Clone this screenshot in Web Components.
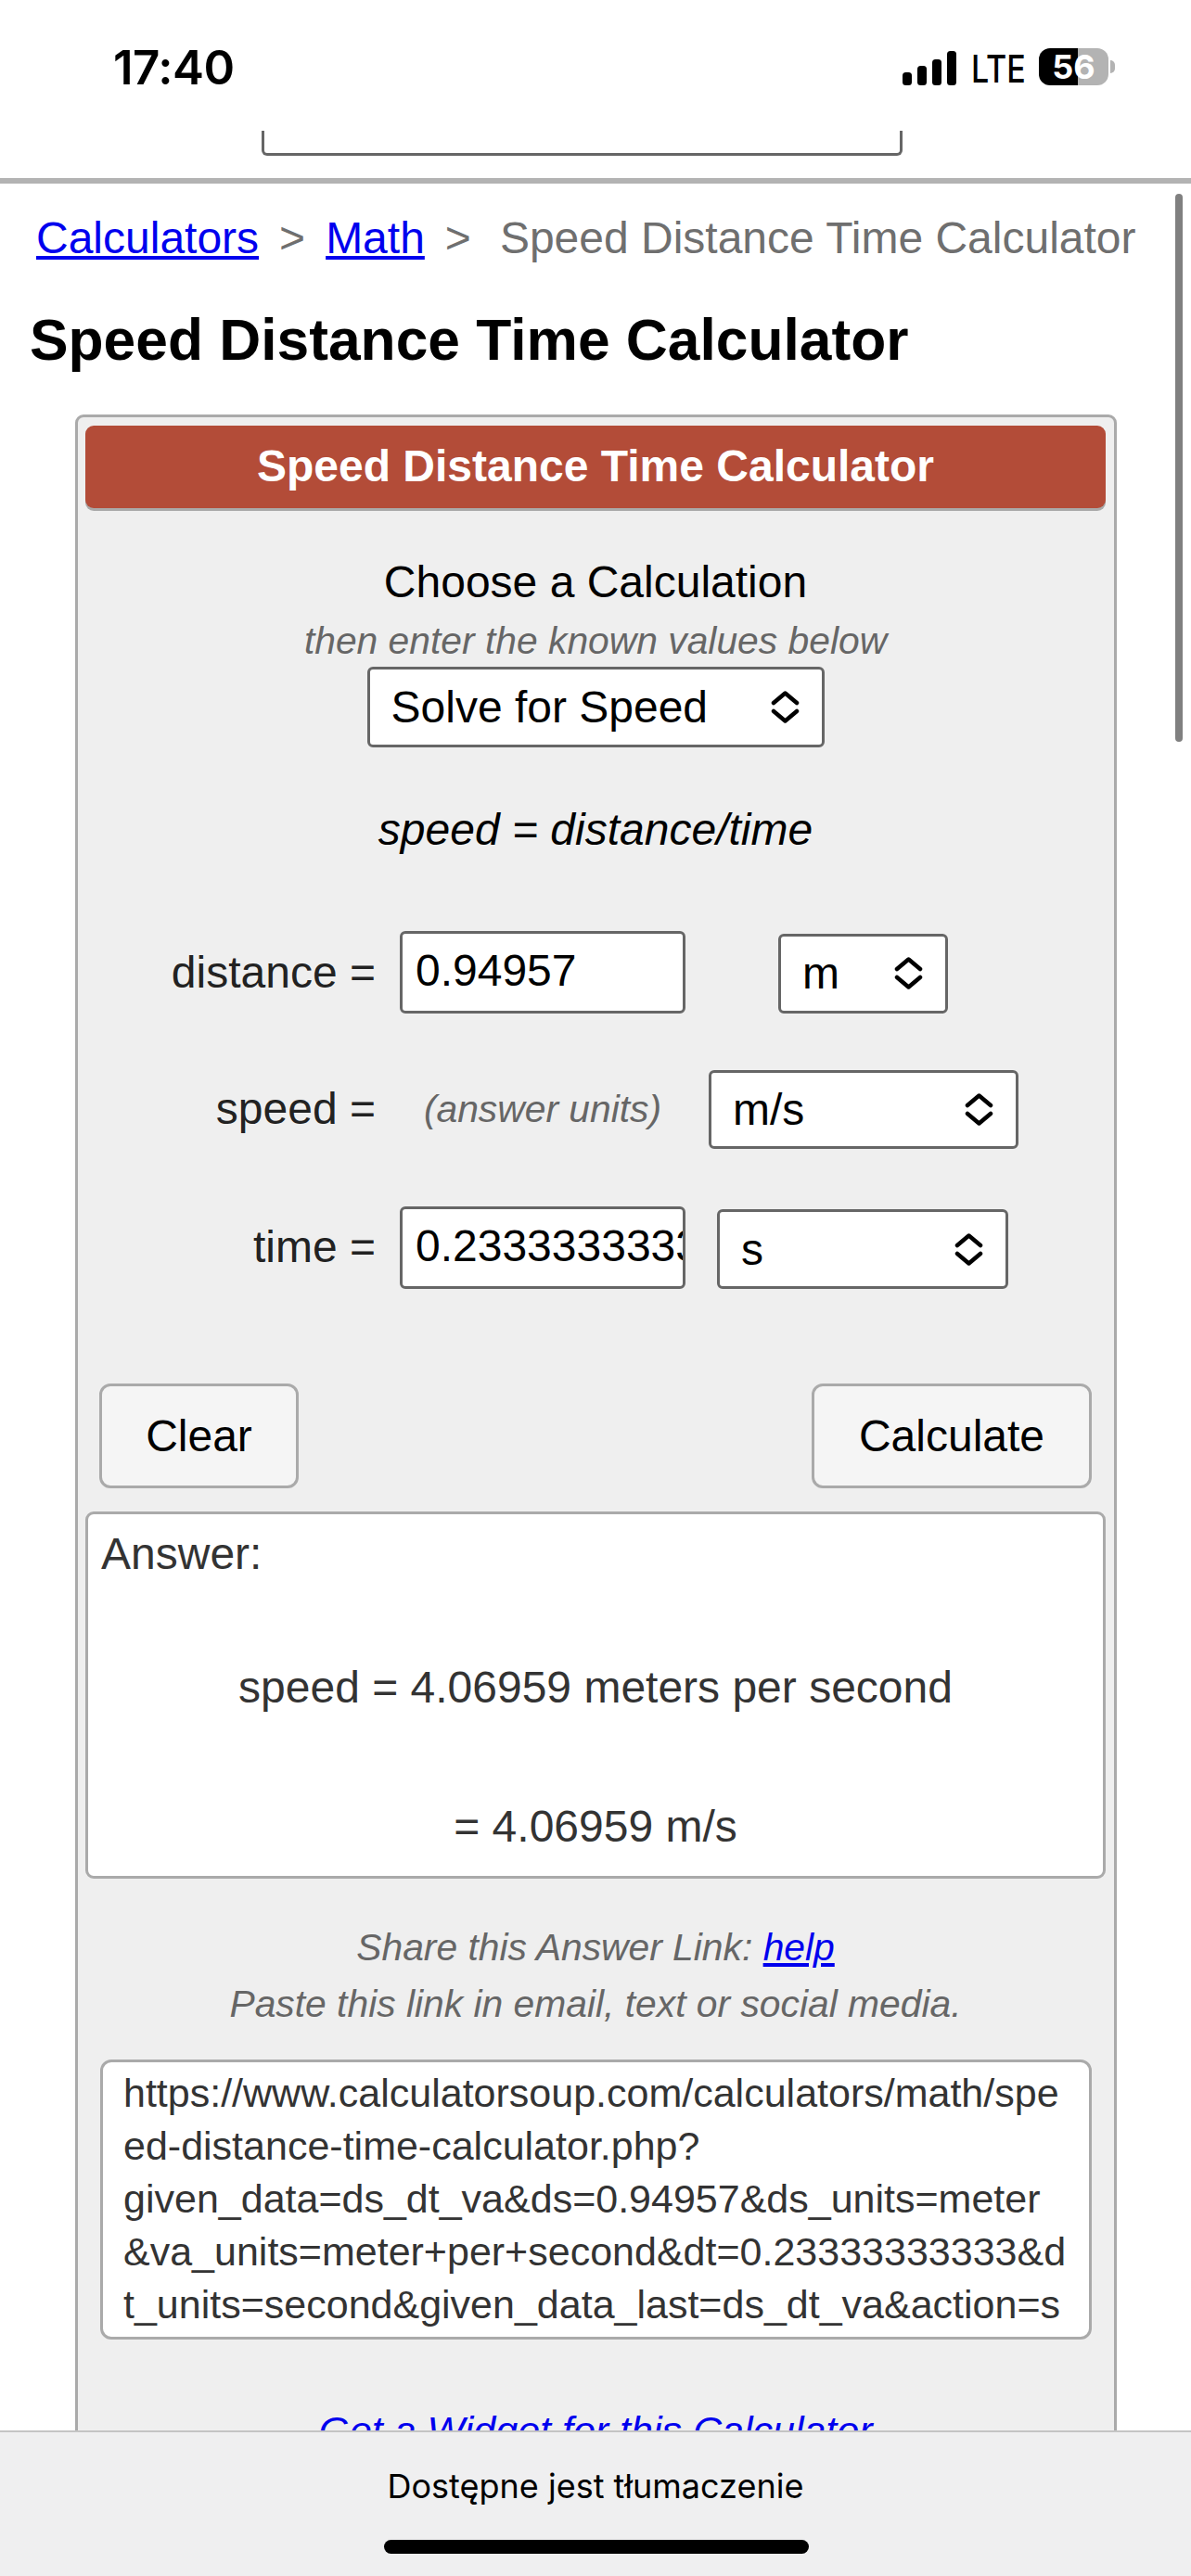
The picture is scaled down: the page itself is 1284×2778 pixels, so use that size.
<!DOCTYPE html>
<html lang="en">
<head>
<meta charset="utf-8">
<title>Speed Distance Time Calculator</title>
<style>
  html, body { margin: 0; padding: 0; background: #fff; }
  body { width: 1284px; height: 2778px; overflow: hidden; position: relative; font-family: "Liberation Sans", Arial, sans-serif; }
</style>
</head>
<body>
<phone-status time="17:40" level="56"></phone-status>
<site-ad></site-ad>
<bread-crumbs>
  <a href="#">Calculators</a>
  <span class="sep">&gt;</span>
  <a href="#">Math</a>
  <span class="sep">&gt;</span>
  <span class="current">Speed Distance Time Calculator</span>
</bread-crumbs>
<page-title>Speed Distance Time Calculator</page-title>
<calc-card heading="Speed Distance Time Calculator">
  <calc-chooser formula="speed = distance/time"></calc-chooser>
  <calc-row label="distance =" style="--row-top:82px">
    <calc-input value="0.94957"></calc-input>
    <calc-select label="m" style="--w:183px;--h:86px;--ml:100px;--mt:2px;--chev:32px"></calc-select>
  </calc-row>
  <calc-row label="speed =" style="--row-top:61px;--label-up:2px">
    <span class="hint">(answer units)</span>
    <calc-select label="m/s" style="--w:334px;--h:85px;--ml:25px;--chev:32px"></calc-select>
  </calc-row>
  <calc-row label="time =" style="--row-top:61px">
    <calc-input value="0.23333333333"></calc-input>
    <calc-select label="s" style="--w:314px;--h:86px;--ml:34px;--mt:4px;--chev:32px"></calc-select>
  </calc-row>
  <calc-actions></calc-actions>
  <answer-box>
    <p>speed = 4.06959 meters per second</p>
    <p>= 4.06959 m/s</p>
  </answer-box>
  <share-box>
    <span>https://www.calculatorsoup.com/calculators/math/spe</span>
    <span>ed-distance-time-calculator.php?</span>
    <span>given_data=ds_dt_va&amp;ds=0.94957&amp;ds_units=meter</span>
    <span>&amp;va_units=meter+per+second&amp;dt=0.23333333333&amp;d</span>
    <span>t_units=second&amp;given_data_last=ds_dt_va&amp;action=s</span>
  </share-box>
</calc-card>
<page-scrollbar></page-scrollbar>
<translate-bar text="Dostępne jest tłumaczenie"></translate-bar>

<script>
class PhoneStatus extends HTMLElement {
  connectedCallback() {
    this.attachShadow({ mode: "open" });
    this.shadowRoot.innerHTML = `
      <style>
        :host { display: flex; align-items: center; height: 141px; padding: 3px 82px 0 122px; box-sizing: border-box; font-family: Inter, "Liberation Sans", sans-serif; color: #000; }
        .time { font-size: 51px; font-weight: 600; letter-spacing: -0.5px; flex: 1; }
        .bars { width: 58px; height: 37px; display: block; margin: 3px 16px 0 0; }
        .net { width: 57px; font-size: 41px; font-weight: 500; line-height: 48px; margin: 3px 16px 0 0; transform: scaleX(.83); transform-origin: left center; white-space: nowrap; }
        .batt { width: 75px; height: 40px; border-radius: 12px; background: linear-gradient(90deg, #000 42px, #b3b3b3 42px); color: #fff; font-size: 36px; font-weight: 700; line-height: 40px; text-align: center; }
        .nub { width: 5px; height: 14px; margin-left: 2px; background: #b3b3b3; border-radius: 0 7px 7px 0; }
      </style>
      <div class="time">${this.getAttribute("time")}</div>
      <svg class="bars" viewBox="0 0 58 37" aria-hidden="true">
        <rect x="0" y="23" width="10" height="14" rx="3.5"/>
        <rect x="16" y="16" width="10" height="21" rx="3.5"/>
        <rect x="32" y="9" width="10" height="28" rx="3.5"/>
        <rect x="48" y="0" width="10" height="37" rx="3.5"/>
      </svg>
      <div class="net">LTE</div>
      <div class="batt">${this.getAttribute("level")}</div>
      <div class="nub"></div>
    `;
  }
}
customElements.define("phone-status", PhoneStatus);

// bottom of the ad slot that is scrolled away under the status bar
class SiteAd extends HTMLElement {
  connectedCallback() {
    this.attachShadow({ mode: "open" });
    this.shadowRoot.innerHTML = `
      <style>
        :host { display: block; height: 51px; border-bottom: 6px solid #b3b3b3; }
        div { width: 691px; height: 27px; margin-left: 282px; box-sizing: border-box; border: 3px solid #666; border-top: 0; border-radius: 0 0 6px 6px; }
      </style>
      <div></div>
    `;
  }
}
customElements.define("site-ad", SiteAd);

class BreadCrumbs extends HTMLElement {
  connectedCallback() {
    this.attachShadow({ mode: "open" });
    this.shadowRoot.innerHTML = `
      <style>
        :host { display: flex; height: 134px; padding: 32px 0 0 39px; box-sizing: border-box; font-size: 48px; line-height: 54px; color: #6f6f6f; white-space: nowrap; }
        ::slotted(a) { color: #00e; text-decoration: underline; }
        ::slotted(.sep) { margin: 0 22px; }
        ::slotted(.current) { margin-left: 9px; }
      </style>
      <slot></slot>
    `;
  }
}
customElements.define("bread-crumbs", BreadCrumbs);

class PageTitle extends HTMLElement {
  connectedCallback() {
    this.attachShadow({ mode: "open" });
    this.shadowRoot.innerHTML = `
      <style>
        :host { display: block; padding-left: 32px; font-size: 62.3px; font-weight: 700; line-height: 70px; color: #000; height: 115px; }
      </style>
      <slot></slot>
    `;
  }
}
customElements.define("page-title", PageTitle);

class CalcCard extends HTMLElement {
  connectedCallback() {
    this.attachShadow({ mode: "open" });
    this.shadowRoot.innerHTML = `
      <style>
        :host { display: block; margin: 0 0 0 81px; width: 1123px; box-sizing: border-box; background: #efefef; border: 3px solid #aaa; border-radius: 9px; padding: 9px 9px 0 8px; }
        header { height: 89px; line-height: 87px; background: #b34c38; color: #fff; font-size: 48px; font-weight: 700; text-align: center; border-radius: 9px; box-shadow: 0 3px 0 #aaa; }
        .widget { display: block; text-align: center; margin-top: 74px; font-size: 43px; line-height: 48px; font-style: italic; color: #00e; text-decoration: underline; padding-bottom: 40px; }
      </style>
      <header>${this.getAttribute("heading")}</header>
      <slot></slot>
      <a class="widget">Get a Widget for this Calculator</a>
    `;
  }
}
customElements.define("calc-card", CalcCard);

const chevron = `<svg viewBox="0 0 31 35" width="31" height="35" fill="none" stroke="#000" stroke-width="4.5" stroke-linecap="round" stroke-linejoin="round" aria-hidden="true"><path d="M3 13 15.5 2.500 28 13M3 22 15.500 32.500 28 22"/></svg>`;

class CalcSelect extends HTMLElement {
  connectedCallback() {
    this.attachShadow({ mode: "open" });
    this.shadowRoot.innerHTML = `
      <style>
        :host { display: flex; align-items: center; justify-content: space-between; box-sizing: border-box; width: var(--w); height: var(--h); margin-left: var(--ml, 0); margin-top: var(--mt, 0); padding: 0 var(--chev, 24px) 0 23px; background: #fff; border: 3px solid #666; border-radius: 6px; font-size: 48px; color: #000; }
        svg { display: block; flex: none; margin-right: -8px; }
      </style>
      <span>${this.getAttribute("label")}</span>${chevron}
    `;
  }
}
customElements.define("calc-select", CalcSelect);

class CalcInput extends HTMLElement {
  connectedCallback() {
    this.attachShadow({ mode: "open" });
    this.shadowRoot.innerHTML = `
      <style>
        :host { display: block; box-sizing: border-box; width: 308px; height: 89px; padding-left: 14px; background: #fff; border: 3px solid #666; border-radius: 6px; font-size: 48px; line-height: 80px; color: #000; overflow: hidden; white-space: nowrap; }
      </style>
      ${this.getAttribute("value")}
    `;
  }
}
customElements.define("calc-input", CalcInput);

class CalcRow extends HTMLElement {
  connectedCallback() {
    this.attachShadow({ mode: "open" });
    this.shadowRoot.innerHTML = `
      <style>
        :host { display: grid; grid-template-columns: 313px 308px auto; column-gap: 26px; justify-content: start; align-items: center; margin-top: var(--row-top); color: #222; }
        label { font-size: 48px; text-align: right; line-height: 54px; margin-bottom: var(--label-up, 0); }
        .field { display: flex; align-items: center; grid-column: 2 / 4; }
        ::slotted(.hint) { font-size: 40.8px; font-style: italic; color: #666; width: 308px; text-align: center; }
      </style>
      <label>${this.getAttribute("label")}</label>
      <div class="field"><slot></slot></div>
    `;
  }
}
customElements.define("calc-row", CalcRow);

class CalcChooser extends HTMLElement {
  connectedCallback() {
    this.attachShadow({ mode: "open" });
    this.shadowRoot.innerHTML = `
      <style>
        :host { display: block; text-align: center; color: #000; padding-top: 53px; }
        .t { font-size: 48px; line-height: 54px; }
        .s { font-size: 40.8px; line-height: 48px; font-style: italic; color: #666; margin-top: 12px; }
        calc-select { margin: 4px auto 0; }
        .f { font-size: 48px; line-height: 54px; font-style: italic; margin-top: 62px; }
      </style>
      <div class="t">Choose a Calculation</div>
      <div class="s">then enter the known values below</div>
      <calc-select label="Solve for Speed" style="--w:493px;--h:87px;--chev:32px"></calc-select>
      <div class="f">${this.getAttribute("formula")}</div>
    `;
  }
}
customElements.define("calc-chooser", CalcChooser);

class CalcActions extends HTMLElement {
  connectedCallback() {
    this.attachShadow({ mode: "open" });
    this.shadowRoot.innerHTML = `
      <style>
        :host { display: flex; justify-content: space-between; margin: 102px 15px 0; }
        div { box-sizing: border-box; height: 113px; line-height: 107px; text-align: center; background: #f5f5f5; border: 3px solid #aaa; border-radius: 12px; font-size: 48px; color: #000; }
        .c { width: 215px; }
        .k { width: 302px; }
      </style>
      <div class="c">Clear</div>
      <div class="k">Calculate</div>
    `;
  }
}
customElements.define("calc-actions", CalcActions);

class AnswerBox extends HTMLElement {
  connectedCallback() {
    this.attachShadow({ mode: "open" });
    this.shadowRoot.innerHTML = `
      <style>
        :host { display: block; box-sizing: border-box; height: 396px; margin-top: 25px; padding: 16px 14px 0; background: #fff; border: 3px solid #aaa; border-radius: 9px; font-size: 48px; line-height: 54px; color: #333; }
        .rows { text-align: center; }
        ::slotted(p) { margin: 0; }
        ::slotted(p:first-child) { margin-top: 90px; }
        ::slotted(p:last-child) { margin-top: 96px; }
      </style>
      <div>Answer:</div>
      <div class="rows"><slot></slot></div>
    `;
  }
}
customElements.define("answer-box", AnswerBox);

class ShareBox extends HTMLElement {
  connectedCallback() {
    this.attachShadow({ mode: "open" });
    this.shadowRoot.innerHTML = `
      <style>
        :host { display: block; }
        .note { text-align: center; font-size: 40.8px; line-height: 48px; font-style: italic; color: #666; margin-top: 50px; }
        .note + .note { margin-top: 13px; }
        a { color: #00e; text-decoration: underline; }
        .url { box-sizing: border-box; height: 302px; margin: 36px 15px 0 16px; padding: 5px 0 0 22px; background: #fff; border: 3px solid #aaa; border-radius: 12px; font-size: 43px; line-height: 57px; color: #333; white-space: nowrap; overflow: hidden; }
        ::slotted(span) { display: block; }
      </style>
      <div class="note">Share this Answer Link: <a>help</a></div>
      <div class="note">Paste this link in email, text or social media.</div>
      <div class="url"><slot></slot></div>
    `;
  }
}
customElements.define("share-box", ShareBox);

// safari scroll indicator, lies over the page
class PageScrollbar extends HTMLElement {
  connectedCallback() {
    this.attachShadow({ mode: "open" });
    this.shadowRoot.innerHTML = `
      <style>
        :host { position: absolute; left: 1267px; top: 209px; width: 8px; height: 591px; border-radius: 4px; background: #808080; }
      </style>
    `;
  }
}
customElements.define("page-scrollbar", PageScrollbar);

// translation sheet, lies over the bottom of the page
class TranslateBar extends HTMLElement {
  connectedCallback() {
    this.attachShadow({ mode: "open" });
    this.shadowRoot.innerHTML = `
      <style>
        :host { position: absolute; left: 0; right: 0; top: 2621px; bottom: 0; display: block; background: #efeff0; border-top: 2px solid #c4c4c4; font-family: Inter, "Liberation Sans", sans-serif; color: #000; text-align: center; }
        .t { font-size: 36px; line-height: 40px; margin-top: 38px; }
        .home { position: absolute; left: 414px; top: 116px; width: 458px; height: 15px; border-radius: 8px; background: #000; }
      </style>
      <div class="t">${this.getAttribute("text")}</div>
      <div class="home"></div>
    `;
  }
}
customElements.define("translate-bar", TranslateBar);
</script>
</body>
</html>
